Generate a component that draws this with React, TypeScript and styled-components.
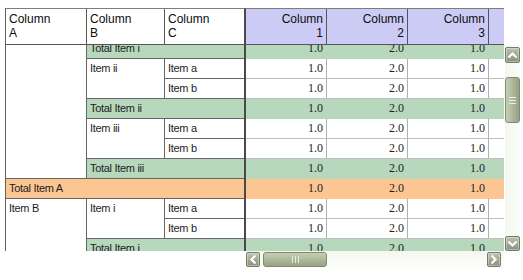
import React from "react";
import styled, { createGlobalStyle } from "styled-components";

type Kind = "data" | "total" | "grand";

interface LabelDef {
  row: number;
  col: number;
  rowSpan?: number;
  colSpan?: number;
  kind?: Kind;
  text: string;
}

// frozen row-header cells, grid is scrolled so the first visible row is "Total Item i"
const labels: LabelDef[] = [
  { row: 1, col: 1, rowSpan: 7, text: "" },
  { row: 1, col: 2, colSpan: 2, kind: "total", text: "Total Item i" },
  { row: 2, col: 2, rowSpan: 2, text: "Item ii" },
  { row: 2, col: 3, text: "Item a" },
  { row: 3, col: 3, text: "Item b" },
  { row: 4, col: 2, colSpan: 2, kind: "total", text: "Total Item ii" },
  { row: 5, col: 2, rowSpan: 2, text: "Item iii" },
  { row: 5, col: 3, text: "Item a" },
  { row: 6, col: 3, text: "Item b" },
  { row: 7, col: 2, colSpan: 2, kind: "total", text: "Total Item iii" },
  { row: 8, col: 1, colSpan: 3, kind: "grand", text: "Total Item A" },
  { row: 9, col: 1, rowSpan: 6, text: "Item B" },
  { row: 9, col: 2, rowSpan: 2, text: "Item i" },
  { row: 9, col: 3, text: "Item a" },
  { row: 10, col: 3, text: "Item b" },
  { row: 11, col: 2, colSpan: 2, kind: "total", text: "Total Item i" },
  { row: 12, col: 2, rowSpan: 2, text: "Item ii" },
  { row: 12, col: 3, text: "Item a" },
  { row: 13, col: 3, text: "Item b" },
];

const rowKinds: Kind[] = [
  "total", "data", "data", "total", "data", "data", "total",
  "grand", "data", "data", "total", "data", "data",
];

const values = ["1.0", "2.0", "1.0"];

const bg = (k?: Kind) =>
  k === "total" ? "#b7d8bd" : k === "grand" ? "#fcc692" : "#ffffff";

export default function App() {
  return (
    <>
      <GlobalStyle />
      <Page>
        <PivotGrid>
          <FrozenHeader>
            <HeadCell>Column<br />A</HeadCell>
            <HeadCell>Column<br />B</HeadCell>
            <HeadCell $last>Column<br />C</HeadCell>
          </FrozenHeader>
          <ScrollHeader>
            <HeadCell $right>Column<br />1</HeadCell>
            <HeadCell $right>Column<br />2</HeadCell>
            <HeadCell $right>Column<br />3</HeadCell>
            <HeadCell $last />
          </ScrollHeader>

          <FrozenBody>
            <LabelGrid>
              {labels.map((l, i) => (
                <LabelCell
                  key={i}
                  $row={l.row}
                  $col={l.col}
                  $rowSpan={l.rowSpan ?? 1}
                  $colSpan={l.colSpan ?? 1}
                  $kind={l.kind ?? "data"}
                >
                  {l.text}
                </LabelCell>
              ))}
            </LabelGrid>
          </FrozenBody>

          <ScrollBody>
            <ValueList>
              {rowKinds.map((k, i) => (
                <ValueRow key={i} $kind={k}>
                  {values.map((v, j) => (
                    <ValueCell key={j} $kind={k}>{v}</ValueCell>
                  ))}
                  <ValueCell $kind={k} $filler />
                </ValueRow>
              ))}
            </ValueList>
          </ScrollBody>

          <VScroll>
            <ArrowButton $w={15} $h={16}>
              <svg width="11" height="8" viewBox="0 0 11 8">
                <polyline points="1.5,6.5 5.5,2.5 9.5,6.5" fill="none" stroke="#fff" strokeWidth="2.2" />
              </svg>
            </ArrowButton>
            <VThumb>
              <Grip $vertical />
            </VThumb>
            <Spacer />
            <ArrowButton $w={15} $h={15}>
              <svg width="11" height="8" viewBox="0 0 11 8">
                <polyline points="1.5,1.5 5.5,5.5 9.5,1.5" fill="none" stroke="#fff" strokeWidth="2.2" />
              </svg>
            </ArrowButton>
          </VScroll>

          <HScroll>
            <ArrowButton $w={14} $h={15}>
              <svg width="8" height="11" viewBox="0 0 8 11">
                <polyline points="6.5,1.5 2.5,5.5 6.5,9.5" fill="none" stroke="#fff" strokeWidth="2.2" />
              </svg>
            </ArrowButton>
            <HThumb>
              <Grip />
            </HThumb>
            <Spacer />
            <ArrowButton $w={14} $h={15}>
              <svg width="8" height="11" viewBox="0 0 8 11">
                <polyline points="1.5,1.5 5.5,5.5 1.5,9.5" fill="none" stroke="#fff" strokeWidth="2.2" />
              </svg>
            </ArrowButton>
          </HScroll>
        </PivotGrid>
      </Page>
    </>
  );
}

const GlobalStyle = createGlobalStyle`
  html, body {
    margin: 0;
    padding: 0;
    background: #fff;
  }
  body {
    font-family: "Liberation Sans", Arial, sans-serif;
    color: #111;
  }
  * { box-sizing: border-box; }
`;

const Page = styled.div`
  padding: 8px 0 0 5px;
`;

const PivotGrid = styled.div`
  display: grid;
  grid-template-columns: 241px 258px 1px 15px;
  grid-template-rows: 37px 206px 17px;
`;

const FrozenHeader = styled.div`
  grid-column: 1;
  grid-row: 1;
  display: grid;
  grid-template-columns: 81px 78px 79px;
  background: #fff;
  border-top: 1px solid #7d7d7d;
  border-left: 1px solid #5f5f5f;
  border-right: 2px solid #4a4a4a;
  border-bottom: 1px solid #555;
`;

const ScrollHeader = styled.div`
  grid-column: 2;
  grid-row: 1;
  display: grid;
  grid-template-columns: 81px 81px 81px 15px;
  background: #cbcbf6;
  border-top: 1px solid #7d7d7d;
  border-bottom: 1px solid #555;
`;

const HeadCell = styled.div<{ $right?: boolean; $last?: boolean }>`
  padding: 3px 3px 0 3px;
  font-size: 12px;
  line-height: 14px;
  color: #0d0d0d;
  text-align: ${(p) => (p.$right ? "right" : "left")};
  border-right: ${(p) => (p.$last ? "none" : "1px solid #555")};
`;

const FrozenBody = styled.div`
  grid-column: 1;
  grid-row: 2;
  overflow: hidden;
  background: #fff;
  border-left: 1px solid #5f5f5f;
  border-right: 2px solid #4a4a4a;
`;

const LabelGrid = styled.div`
  display: grid;
  grid-template-columns: 81px 78px 79px;
  grid-auto-rows: 20px;
  margin-top: -6px;
`;

const LabelCell = styled.div<{
  $row: number;
  $col: number;
  $rowSpan: number;
  $colSpan: number;
  $kind: Kind;
}>`
  grid-row: ${(p) => p.$row} / span ${(p) => p.$rowSpan};
  grid-column: ${(p) => p.$col} / span ${(p) => p.$colSpan};
  background: ${(p) => bg(p.$kind)};
  border-bottom: 1px solid #666;
  border-right: ${(p) => (p.$col + p.$colSpan - 1 === 3 ? "none" : "1px solid #666")};
  padding: 0 3px;
  font-size: 11px;
  line-height: 19px;
  letter-spacing: -0.3px;
  color: #1c1c1c;
  white-space: nowrap;
  overflow: hidden;
`;

const ScrollBody = styled.div`
  grid-column: 2;
  grid-row: 2;
  overflow: hidden;
  background: #fff;
`;

const ValueList = styled.div`
  display: flex;
  flex-direction: column;
  margin-top: -6px;
`;

const ValueRow = styled.div<{ $kind: Kind }>`
  display: grid;
  grid-template-columns: 81px 81px 81px 15px;
  height: 20px;
  background: ${(p) => bg(p.$kind)};
  border-bottom: 1px solid ${(p) => (p.$kind === "data" ? "#bdbdbd" : bg(p.$kind))};
`;

const ValueCell = styled.div<{ $kind: Kind; $filler?: boolean }>`
  text-align: right;
  padding-right: 3px;
  font-family: "Liberation Serif", "Times New Roman", serif;
  font-size: 12px;
  line-height: 19px;
  color: #1e1e1e;
  border-right: 1px solid
    ${(p) => (p.$kind === "data" && !p.$filler ? "#b0b0b0" : "transparent")};
`;

const VScroll = styled.div`
  grid-column: 4;
  grid-row: 2;
  display: flex;
  flex-direction: column;
  padding-top: 2px;
  background: linear-gradient(to right, #f4f7ef, #fbfcf9);
`;

const HScroll = styled.div`
  grid-column: 2;
  grid-row: 3;
  display: flex;
  align-items: flex-start;
  gap: 3px;
  padding: 1px 3px 0 0;
  background: linear-gradient(#f4f7ef, #fcfdfb);
`;

const Spacer = styled.div`
  flex: 1;
`;

const ArrowButton = styled.div<{ $w: number; $h: number }>`
  width: ${(p) => p.$w}px;
  height: ${(p) => p.$h}px;
  flex: none;
  display: flex;
  align-items: center;
  justify-content: center;
  background: linear-gradient(#bcc3ae, #88917a);
  border: 1px solid #747d69;
  border-radius: 2px;
  box-shadow: inset 0 0 0 1px rgba(255, 255, 255, 0.35);
`;

const VThumb = styled.div`
  margin-top: 14px;
  width: 15px;
  height: 46px;
  display: flex;
  align-items: center;
  justify-content: center;
  background: linear-gradient(to right, #c6cfb4, #96a284);
  border: 1px solid #7f8a6e;
  border-radius: 3px;
`;

const HThumb = styled.div`
  width: 64px;
  height: 15px;
  display: flex;
  align-items: center;
  justify-content: center;
  background: linear-gradient(#c6cfb4, #96a284);
  border: 1px solid #7f8a6e;
  border-radius: 3px;
`;

const Grip = styled.div<{ $vertical?: boolean }>`
  width: 7px;
  height: 7px;
  background: ${(p) =>
    p.$vertical
      ? "repeating-linear-gradient(#e9ede2 0 1px, transparent 1px 3px)"
      : "repeating-linear-gradient(to right, #e9ede2 0 1px, transparent 1px 3px)"};
`;
